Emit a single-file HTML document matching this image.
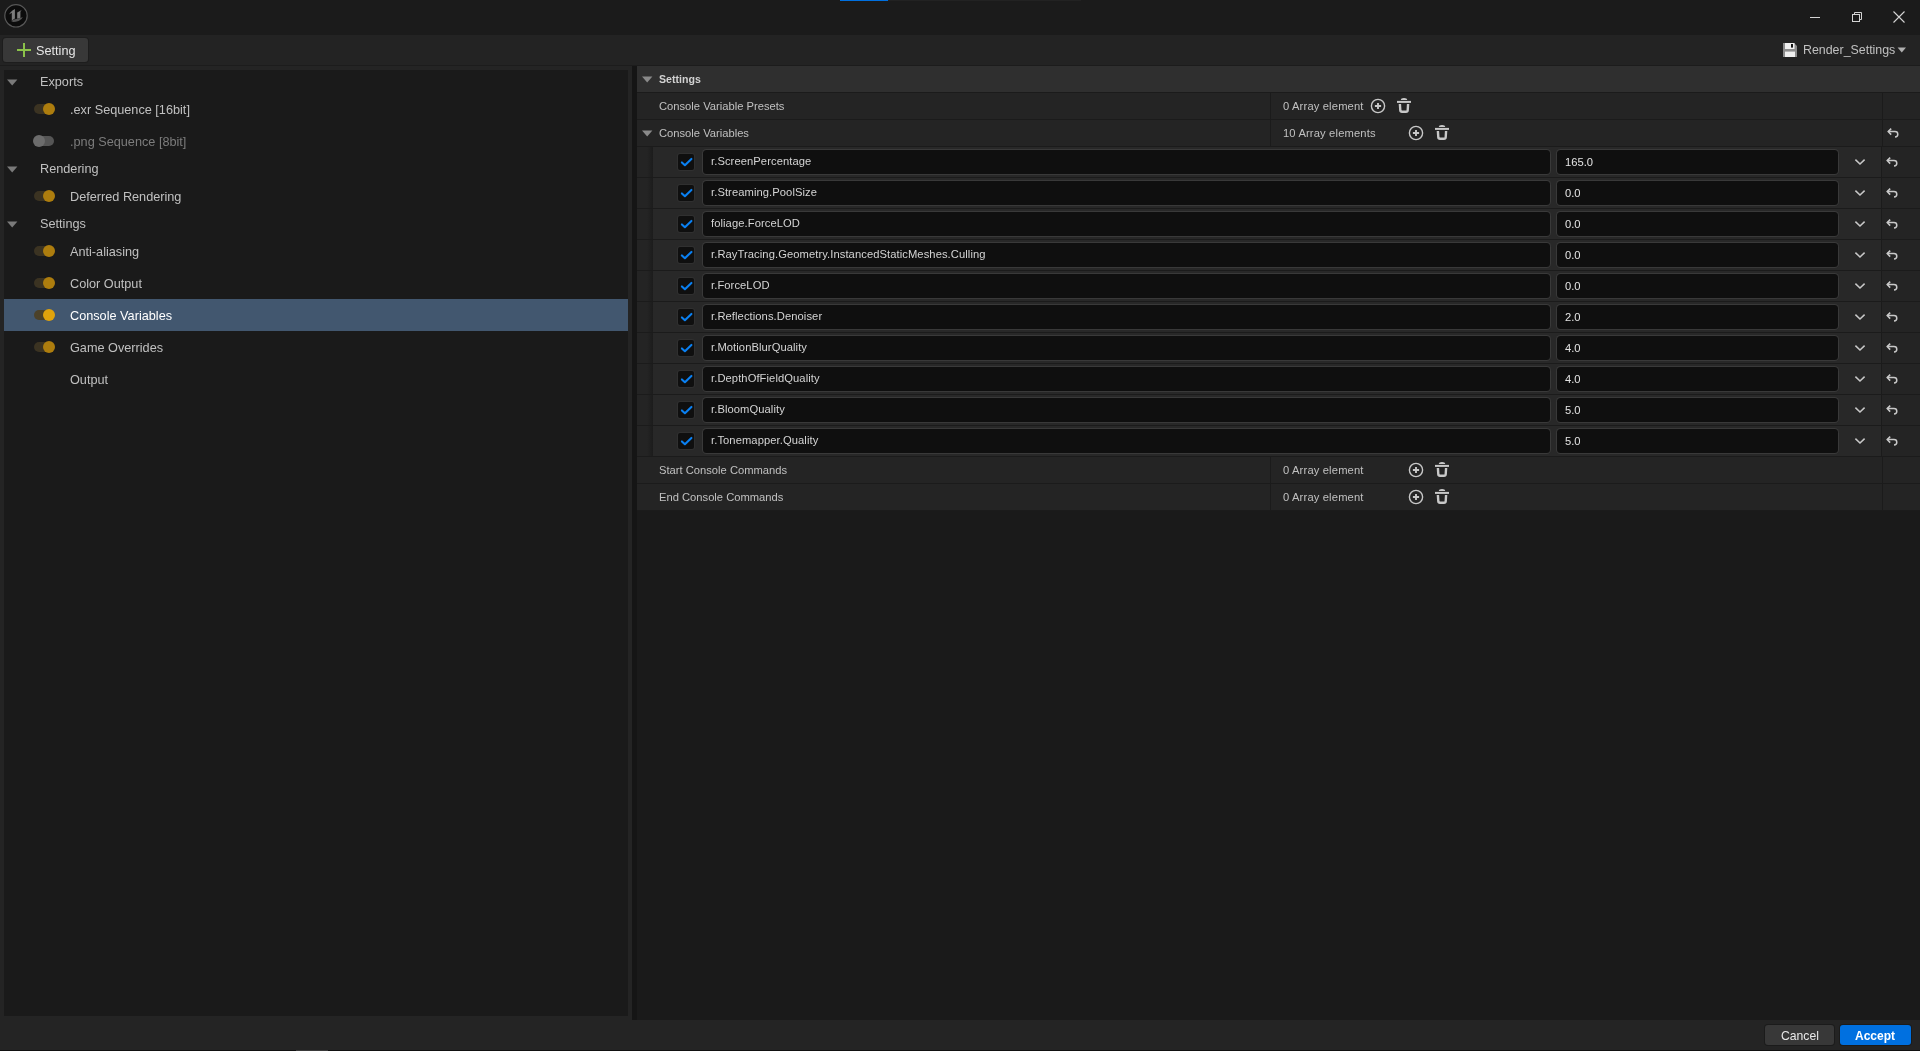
<!DOCTYPE html>
<html><head><meta charset="utf-8"><title>Render Settings</title>
<style>
html,body{margin:0;padding:0;width:1920px;height:1051px;overflow:hidden;background:#1b1b1b;}
body{position:relative;font-family:"Liberation Sans", sans-serif;}
div,svg{position:absolute;box-sizing:border-box;}
.t{white-space:nowrap;line-height:1;will-change:transform;}
</style></head><body>
<div style="left:0px;top:0px;width:1920px;height:35px;background:#1b1b1b;"></div>
<div style="left:840px;top:0px;width:48px;height:1px;background:#0070e0;"></div>
<div style="left:888px;top:0px;width:193px;height:1px;background:#222222;"></div>
<svg style="left:0px;top:0px" width="32" height="32" viewBox="0 0 32 32"><circle cx="16" cy="15.8" r="11.2" fill="#0c0c0c" stroke="#585858" stroke-width="1.2"/><path d="M9.2 14.6 Q10.2 11.6 14.9 9.1 L14.9 18.6 L11.8 20.6 L11.8 12.8 Q10.6 13.3 9.2 14.6 Z" fill="#7c7c7c"/><path d="M17.2 12.4 L21.7 9.9 L20.4 11.8 L20.4 17.8 L17.2 18.8 Z" fill="#7c7c7c"/><path d="M11.0 20.9 Q14 19.3 17.2 18.8 L20.4 17.8 Q21.8 17.6 22.8 17.0 Q21.9 20.0 18.6 20.9 Q15.4 21.7 13.2 21.9 Z" fill="#555555"/></svg>
<div style="left:1810px;top:17px;width:10px;height:1px;background:#d4d4d4;"></div>
<svg style="left:1850px;top:10px" width="14" height="14" viewBox="0 0 14 14"><rect x="2.5" y="4.5" width="7" height="7" fill="none" stroke="#d4d4d4" stroke-width="1"/><path d="M4.5 4.5 V2.5 H11.5 V9.5 H9.5" fill="none" stroke="#d4d4d4" stroke-width="1"/></svg>
<svg style="left:1891px;top:10px" width="16" height="16" viewBox="0 0 16 16"><path d="M2.5 1.5 L13.5 12.5 M13.5 1.5 L2.5 12.5" stroke="#d4d4d4" stroke-width="1.1"/></svg>
<div style="left:0px;top:35px;width:1920px;height:30px;background:#232323;"></div>
<div style="left:0px;top:65px;width:1920px;height:1px;background:#1c1c1c;"></div>
<div style="left:3px;top:38px;width:85px;height:24px;background:#383838;border-radius:3px;box-shadow:0 0 0 1px #1d1d1d;"></div>
<div style="left:17px;top:49px;width:14px;height:2.4px;background:#8bc24a;"></div>
<div style="left:22.8px;top:43px;width:2.4px;height:14px;background:#8bc24a;"></div>
<div class="t" style="left:35.7px;top:44.55px;font-size:12.7px;color:#e6e6e6;font-weight:400;">Setting</div>
<svg style="left:1782px;top:42px" width="16" height="16" viewBox="0 0 16 16"><path d="M1 1 H12 L15 4 V15 H1 Z" fill="#8c8c8c"/><rect x="3" y="1" width="9.5" height="6" fill="#f0f0f0"/><rect x="9" y="2" width="2" height="3.6" fill="#111"/><rect x="3" y="9.6" width="10" height="5.4" fill="#f0f0f0"/></svg>
<div class="t" style="left:1802.7px;top:44.10px;font-size:12.4px;color:#c0c0c0;font-weight:400;">Render_Settings</div>
<svg style="left:1897px;top:47px" width="10" height="6" viewBox="0 0 10 6"><path d="M0.6 0.6 H9 L4.8 5.4 Z" fill="#b0b0b0"/></svg>
<div style="left:0px;top:66px;width:632px;height:950px;background:#242424;"></div>
<div style="left:4px;top:70px;width:624px;height:946px;background:#1a1a1a;"></div>
<svg style="left:6.7px;top:78.8px" width="11" height="7" viewBox="0 0 11 7"><path d="M0 0.4 H10.4 L5.2 6.6 Z" fill="#7a7a7a"/></svg>
<div class="t" style="left:40.4px;top:76.05px;font-size:12.7px;color:#c0c0c0;font-weight:400;">Exports</div>
<div style="left:34px;top:104px;width:20px;height:10px;background:#3b3322;border-radius:5px;"></div>
<div style="left:43px;top:102.8px;width:12.4px;height:12.4px;background:#ad7d0e;border-radius:50%;"></div>
<div class="t" style="left:70.3px;top:104.05px;font-size:12.7px;color:#c0c0c0;font-weight:400;">.exr Sequence [16bit]</div>
<div style="left:34px;top:136px;width:20px;height:10px;background:#555555;border-radius:5px;"></div>
<div style="left:32.8px;top:134.8px;width:12.4px;height:12.4px;background:#6c6c6c;border-radius:50%;"></div>
<div class="t" style="left:70.3px;top:136.05px;font-size:12.7px;color:#7c7c7c;font-weight:400;">.png Sequence [8bit]</div>
<svg style="left:6.7px;top:165.8px" width="11" height="7" viewBox="0 0 11 7"><path d="M0 0.4 H10.4 L5.2 6.6 Z" fill="#7a7a7a"/></svg>
<div class="t" style="left:40.4px;top:163.05px;font-size:12.7px;color:#c0c0c0;font-weight:400;">Rendering</div>
<div style="left:34px;top:191px;width:20px;height:10px;background:#3b3322;border-radius:5px;"></div>
<div style="left:43px;top:189.8px;width:12.4px;height:12.4px;background:#ad7d0e;border-radius:50%;"></div>
<div class="t" style="left:70.3px;top:191.05px;font-size:12.7px;color:#c0c0c0;font-weight:400;">Deferred Rendering</div>
<svg style="left:6.7px;top:220.8px" width="11" height="7" viewBox="0 0 11 7"><path d="M0 0.4 H10.4 L5.2 6.6 Z" fill="#7a7a7a"/></svg>
<div class="t" style="left:40.4px;top:218.05px;font-size:12.7px;color:#c0c0c0;font-weight:400;">Settings</div>
<div style="left:34px;top:246px;width:20px;height:10px;background:#3b3322;border-radius:5px;"></div>
<div style="left:43px;top:244.8px;width:12.4px;height:12.4px;background:#ad7d0e;border-radius:50%;"></div>
<div class="t" style="left:70.3px;top:246.05px;font-size:12.7px;color:#c0c0c0;font-weight:400;">Anti-aliasing</div>
<div style="left:34px;top:278px;width:20px;height:10px;background:#3b3322;border-radius:5px;"></div>
<div style="left:43px;top:276.8px;width:12.4px;height:12.4px;background:#ad7d0e;border-radius:50%;"></div>
<div class="t" style="left:70.3px;top:278.05px;font-size:12.7px;color:#c0c0c0;font-weight:400;">Color Output</div>
<div style="left:4px;top:299px;width:624px;height:32px;background:#42576f;"></div>
<div style="left:34px;top:310px;width:20px;height:10px;background:#4b4129;border-radius:5px;"></div>
<div style="left:43px;top:308.8px;width:12.4px;height:12.4px;background:#e0a30c;border-radius:50%;"></div>
<div class="t" style="left:70.3px;top:310.05px;font-size:12.7px;color:#ffffff;font-weight:400;">Console Variables</div>
<div style="left:34px;top:342px;width:20px;height:10px;background:#3b3322;border-radius:5px;"></div>
<div style="left:43px;top:340.8px;width:12.4px;height:12.4px;background:#ad7d0e;border-radius:50%;"></div>
<div class="t" style="left:70.3px;top:342.05px;font-size:12.7px;color:#c0c0c0;font-weight:400;">Game Overrides</div>
<div class="t" style="left:70.3px;top:374.05px;font-size:12.7px;color:#c0c0c0;font-weight:400;">Output</div>
<div style="left:632px;top:66px;width:5px;height:954px;background:#151515;"></div>
<div style="left:637px;top:66px;width:1283px;height:954px;background:#1a1a1a;"></div>
<div style="left:637px;top:66px;width:1283px;height:26px;background:#2f2f2f;"></div>
<div style="left:637px;top:92px;width:1283px;height:1px;background:#1b1b1b;"></div>
<svg style="left:641.8px;top:75.8px" width="11" height="7" viewBox="0 0 11 7"><path d="M0 0.4 H10.4 L5.2 6.6 Z" fill="#8a8a8a"/></svg>
<div class="t" style="left:659.2px;top:74.03px;font-size:10.6px;color:#d2d2d2;font-weight:700;">Settings</div>
<div style="left:637px;top:93px;width:1283px;height:26px;background:#242424;"></div>
<div style="left:637px;top:119px;width:1283px;height:1px;background:#1b1b1b;"></div>
<div style="left:1270px;top:93px;width:1px;height:26px;background:#1b1b1b;"></div>
<div style="left:1882px;top:93px;width:1px;height:26px;background:#1b1b1b;"></div>
<div class="t" style="left:659.3px;top:100.52px;font-size:11.2px;color:#c0c0c0;font-weight:400;">Console Variable Presets</div>
<div class="t" style="left:1283.2px;top:100.52px;font-size:11.2px;color:#c0c0c0;font-weight:400;letter-spacing:0.15px;">0 Array element</div>
<svg style="left:1370px;top:97.9px" width="16" height="16" viewBox="0 0 16 16"><circle cx="8" cy="8" r="6.6" fill="none" stroke="#c8c8c8" stroke-width="1.4"/><path d="M4.9 8 H11.1 M8 4.9 V11.1" stroke="#c8c8c8" stroke-width="1.9"/></svg>
<svg style="left:1397px;top:97px" width="15" height="17" viewBox="0 0 15 17"><path d="M3.8 2.9 Q3.8 0.9 7 0.9 Q10.2 0.9 10.2 2.9 Z" fill="#c8c8c8"/><rect x="0" y="3.9" width="14" height="2" fill="#c8c8c8"/><path d="M2.9 7 L3.3 13.2 Q3.4 14.8 5 14.8 H9 Q10.6 14.8 10.7 13.2 L11.1 7" fill="none" stroke="#c8c8c8" stroke-width="2.4"/></svg>
<div style="left:637px;top:120px;width:1283px;height:26px;background:#242424;"></div>
<div style="left:637px;top:146px;width:1283px;height:1px;background:#1b1b1b;"></div>
<div style="left:1270px;top:120px;width:1px;height:26px;background:#1b1b1b;"></div>
<div style="left:1882px;top:120px;width:1px;height:26px;background:#1b1b1b;"></div>
<svg style="left:641.8px;top:130px" width="11" height="7" viewBox="0 0 11 7"><path d="M0 0.4 H10.4 L5.2 6.6 Z" fill="#8a8a8a"/></svg>
<div class="t" style="left:659.3px;top:127.52px;font-size:11.2px;color:#c0c0c0;font-weight:400;">Console Variables</div>
<div class="t" style="left:1283.2px;top:127.52px;font-size:11.2px;color:#c0c0c0;font-weight:400;letter-spacing:0.15px;">10 Array elements</div>
<svg style="left:1408px;top:124.9px" width="16" height="16" viewBox="0 0 16 16"><circle cx="8" cy="8" r="6.6" fill="none" stroke="#c8c8c8" stroke-width="1.4"/><path d="M4.9 8 H11.1 M8 4.9 V11.1" stroke="#c8c8c8" stroke-width="1.9"/></svg>
<svg style="left:1435px;top:124px" width="15" height="17" viewBox="0 0 15 17"><path d="M3.8 2.9 Q3.8 0.9 7 0.9 Q10.2 0.9 10.2 2.9 Z" fill="#c8c8c8"/><rect x="0" y="3.9" width="14" height="2" fill="#c8c8c8"/><path d="M2.9 7 L3.3 13.2 Q3.4 14.8 5 14.8 H9 Q10.6 14.8 10.7 13.2 L11.1 7" fill="none" stroke="#c8c8c8" stroke-width="2.4"/></svg>
<svg style="left:1887px;top:128px" width="14" height="12" viewBox="0 0 14 12"><path d="M1.2 3.6 H8 Q10.8 3.6 10.8 6.3 Q10.8 9 8 9" fill="none" stroke="#c8c8c8" stroke-width="1.5"/><path d="M4.2 0.6 L1.2 3.6 L4.2 6.6" fill="none" stroke="#c8c8c8" stroke-width="1.5"/></svg>
<div style="left:637px;top:147px;width:16px;height:30px;background:#242424;"></div>
<div style="left:647px;top:147px;width:6px;height:30px;background:linear-gradient(90deg,#242424,#1c1c1c);"></div>
<div style="left:653px;top:147px;width:1228px;height:30px;background:#282828;"></div>
<div style="left:1881px;top:147px;width:1px;height:30px;background:#1b1b1b;"></div>
<div style="left:1882px;top:147px;width:38px;height:30px;background:#242424;"></div>
<div style="left:637px;top:177px;width:1283px;height:1px;background:#1b1b1b;"></div>
<div style="left:678px;top:154px;width:16px;height:16px;background:#0f0f0f;border-radius:2px;box-shadow:0 0 0 1px #303030;"></div>
<svg style="left:677px;top:153px" width="18" height="18" viewBox="0 0 18 18"><path d="M4.9 9.4 L7.9 12.2 L14.4 5.9" fill="none" stroke="#0a80f2" stroke-width="2.1" stroke-linecap="round" stroke-linejoin="round"/></svg>
<div style="left:703px;top:150px;width:847px;height:24px;background:#0f0f0f;border-radius:3.5px;box-shadow:0 0 0 1px #393939;"></div>
<div class="t" style="left:711px;top:156.02px;font-size:11.2px;color:#d4d4d4;font-weight:400;letter-spacing:0.08px;">r.ScreenPercentage</div>
<div style="left:1557px;top:150px;width:281px;height:24px;background:#0f0f0f;border-radius:3.5px;box-shadow:0 0 0 1px #393939;"></div>
<div class="t" style="left:1565.2px;top:156.52px;font-size:11.2px;color:#e4e4e4;font-weight:400;">165.0</div>
<svg style="left:1854px;top:158px" width="12" height="8" viewBox="0 0 12 8"><path d="M1.4 1.6 L6 6 L10.6 1.6" fill="none" stroke="#c8c8c8" stroke-width="1.5"/></svg>
<svg style="left:1885.5px;top:156.5px" width="14" height="12" viewBox="0 0 14 12"><path d="M1.2 3.6 H8 Q10.8 3.6 10.8 6.3 Q10.8 9 8 9" fill="none" stroke="#c8c8c8" stroke-width="1.5"/><path d="M4.2 0.6 L1.2 3.6 L4.2 6.6" fill="none" stroke="#c8c8c8" stroke-width="1.5"/></svg>
<div style="left:637px;top:178px;width:16px;height:30px;background:#242424;"></div>
<div style="left:647px;top:178px;width:6px;height:30px;background:linear-gradient(90deg,#242424,#1c1c1c);"></div>
<div style="left:653px;top:178px;width:1228px;height:30px;background:#282828;"></div>
<div style="left:1881px;top:178px;width:1px;height:30px;background:#1b1b1b;"></div>
<div style="left:1882px;top:178px;width:38px;height:30px;background:#242424;"></div>
<div style="left:637px;top:208px;width:1283px;height:1px;background:#1b1b1b;"></div>
<div style="left:678px;top:185px;width:16px;height:16px;background:#0f0f0f;border-radius:2px;box-shadow:0 0 0 1px #303030;"></div>
<svg style="left:677px;top:184px" width="18" height="18" viewBox="0 0 18 18"><path d="M4.9 9.4 L7.9 12.2 L14.4 5.9" fill="none" stroke="#0a80f2" stroke-width="2.1" stroke-linecap="round" stroke-linejoin="round"/></svg>
<div style="left:703px;top:181px;width:847px;height:24px;background:#0f0f0f;border-radius:3.5px;box-shadow:0 0 0 1px #393939;"></div>
<div class="t" style="left:711px;top:187.02px;font-size:11.2px;color:#d4d4d4;font-weight:400;letter-spacing:0.08px;">r.Streaming.PoolSize</div>
<div style="left:1557px;top:181px;width:281px;height:24px;background:#0f0f0f;border-radius:3.5px;box-shadow:0 0 0 1px #393939;"></div>
<div class="t" style="left:1565.2px;top:187.52px;font-size:11.2px;color:#e4e4e4;font-weight:400;">0.0</div>
<svg style="left:1854px;top:189px" width="12" height="8" viewBox="0 0 12 8"><path d="M1.4 1.6 L6 6 L10.6 1.6" fill="none" stroke="#c8c8c8" stroke-width="1.5"/></svg>
<svg style="left:1885.5px;top:187.5px" width="14" height="12" viewBox="0 0 14 12"><path d="M1.2 3.6 H8 Q10.8 3.6 10.8 6.3 Q10.8 9 8 9" fill="none" stroke="#c8c8c8" stroke-width="1.5"/><path d="M4.2 0.6 L1.2 3.6 L4.2 6.6" fill="none" stroke="#c8c8c8" stroke-width="1.5"/></svg>
<div style="left:637px;top:209px;width:16px;height:30px;background:#242424;"></div>
<div style="left:647px;top:209px;width:6px;height:30px;background:linear-gradient(90deg,#242424,#1c1c1c);"></div>
<div style="left:653px;top:209px;width:1228px;height:30px;background:#282828;"></div>
<div style="left:1881px;top:209px;width:1px;height:30px;background:#1b1b1b;"></div>
<div style="left:1882px;top:209px;width:38px;height:30px;background:#242424;"></div>
<div style="left:637px;top:239px;width:1283px;height:1px;background:#1b1b1b;"></div>
<div style="left:678px;top:216px;width:16px;height:16px;background:#0f0f0f;border-radius:2px;box-shadow:0 0 0 1px #303030;"></div>
<svg style="left:677px;top:215px" width="18" height="18" viewBox="0 0 18 18"><path d="M4.9 9.4 L7.9 12.2 L14.4 5.9" fill="none" stroke="#0a80f2" stroke-width="2.1" stroke-linecap="round" stroke-linejoin="round"/></svg>
<div style="left:703px;top:212px;width:847px;height:24px;background:#0f0f0f;border-radius:3.5px;box-shadow:0 0 0 1px #393939;"></div>
<div class="t" style="left:711px;top:218.02px;font-size:11.2px;color:#d4d4d4;font-weight:400;letter-spacing:0.08px;">foliage.ForceLOD</div>
<div style="left:1557px;top:212px;width:281px;height:24px;background:#0f0f0f;border-radius:3.5px;box-shadow:0 0 0 1px #393939;"></div>
<div class="t" style="left:1565.2px;top:218.52px;font-size:11.2px;color:#e4e4e4;font-weight:400;">0.0</div>
<svg style="left:1854px;top:220px" width="12" height="8" viewBox="0 0 12 8"><path d="M1.4 1.6 L6 6 L10.6 1.6" fill="none" stroke="#c8c8c8" stroke-width="1.5"/></svg>
<svg style="left:1885.5px;top:218.5px" width="14" height="12" viewBox="0 0 14 12"><path d="M1.2 3.6 H8 Q10.8 3.6 10.8 6.3 Q10.8 9 8 9" fill="none" stroke="#c8c8c8" stroke-width="1.5"/><path d="M4.2 0.6 L1.2 3.6 L4.2 6.6" fill="none" stroke="#c8c8c8" stroke-width="1.5"/></svg>
<div style="left:637px;top:240px;width:16px;height:30px;background:#242424;"></div>
<div style="left:647px;top:240px;width:6px;height:30px;background:linear-gradient(90deg,#242424,#1c1c1c);"></div>
<div style="left:653px;top:240px;width:1228px;height:30px;background:#282828;"></div>
<div style="left:1881px;top:240px;width:1px;height:30px;background:#1b1b1b;"></div>
<div style="left:1882px;top:240px;width:38px;height:30px;background:#242424;"></div>
<div style="left:637px;top:270px;width:1283px;height:1px;background:#1b1b1b;"></div>
<div style="left:678px;top:247px;width:16px;height:16px;background:#0f0f0f;border-radius:2px;box-shadow:0 0 0 1px #303030;"></div>
<svg style="left:677px;top:246px" width="18" height="18" viewBox="0 0 18 18"><path d="M4.9 9.4 L7.9 12.2 L14.4 5.9" fill="none" stroke="#0a80f2" stroke-width="2.1" stroke-linecap="round" stroke-linejoin="round"/></svg>
<div style="left:703px;top:243px;width:847px;height:24px;background:#0f0f0f;border-radius:3.5px;box-shadow:0 0 0 1px #393939;"></div>
<div class="t" style="left:711px;top:249.02px;font-size:11.2px;color:#d4d4d4;font-weight:400;letter-spacing:0.08px;">r.RayTracing.Geometry.InstancedStaticMeshes.Culling</div>
<div style="left:1557px;top:243px;width:281px;height:24px;background:#0f0f0f;border-radius:3.5px;box-shadow:0 0 0 1px #393939;"></div>
<div class="t" style="left:1565.2px;top:249.52px;font-size:11.2px;color:#e4e4e4;font-weight:400;">0.0</div>
<svg style="left:1854px;top:251px" width="12" height="8" viewBox="0 0 12 8"><path d="M1.4 1.6 L6 6 L10.6 1.6" fill="none" stroke="#c8c8c8" stroke-width="1.5"/></svg>
<svg style="left:1885.5px;top:249.5px" width="14" height="12" viewBox="0 0 14 12"><path d="M1.2 3.6 H8 Q10.8 3.6 10.8 6.3 Q10.8 9 8 9" fill="none" stroke="#c8c8c8" stroke-width="1.5"/><path d="M4.2 0.6 L1.2 3.6 L4.2 6.6" fill="none" stroke="#c8c8c8" stroke-width="1.5"/></svg>
<div style="left:637px;top:271px;width:16px;height:30px;background:#242424;"></div>
<div style="left:647px;top:271px;width:6px;height:30px;background:linear-gradient(90deg,#242424,#1c1c1c);"></div>
<div style="left:653px;top:271px;width:1228px;height:30px;background:#282828;"></div>
<div style="left:1881px;top:271px;width:1px;height:30px;background:#1b1b1b;"></div>
<div style="left:1882px;top:271px;width:38px;height:30px;background:#242424;"></div>
<div style="left:637px;top:301px;width:1283px;height:1px;background:#1b1b1b;"></div>
<div style="left:678px;top:278px;width:16px;height:16px;background:#0f0f0f;border-radius:2px;box-shadow:0 0 0 1px #303030;"></div>
<svg style="left:677px;top:277px" width="18" height="18" viewBox="0 0 18 18"><path d="M4.9 9.4 L7.9 12.2 L14.4 5.9" fill="none" stroke="#0a80f2" stroke-width="2.1" stroke-linecap="round" stroke-linejoin="round"/></svg>
<div style="left:703px;top:274px;width:847px;height:24px;background:#0f0f0f;border-radius:3.5px;box-shadow:0 0 0 1px #393939;"></div>
<div class="t" style="left:711px;top:280.02px;font-size:11.2px;color:#d4d4d4;font-weight:400;letter-spacing:0.08px;">r.ForceLOD</div>
<div style="left:1557px;top:274px;width:281px;height:24px;background:#0f0f0f;border-radius:3.5px;box-shadow:0 0 0 1px #393939;"></div>
<div class="t" style="left:1565.2px;top:280.52px;font-size:11.2px;color:#e4e4e4;font-weight:400;">0.0</div>
<svg style="left:1854px;top:282px" width="12" height="8" viewBox="0 0 12 8"><path d="M1.4 1.6 L6 6 L10.6 1.6" fill="none" stroke="#c8c8c8" stroke-width="1.5"/></svg>
<svg style="left:1885.5px;top:280.5px" width="14" height="12" viewBox="0 0 14 12"><path d="M1.2 3.6 H8 Q10.8 3.6 10.8 6.3 Q10.8 9 8 9" fill="none" stroke="#c8c8c8" stroke-width="1.5"/><path d="M4.2 0.6 L1.2 3.6 L4.2 6.6" fill="none" stroke="#c8c8c8" stroke-width="1.5"/></svg>
<div style="left:637px;top:302px;width:16px;height:30px;background:#242424;"></div>
<div style="left:647px;top:302px;width:6px;height:30px;background:linear-gradient(90deg,#242424,#1c1c1c);"></div>
<div style="left:653px;top:302px;width:1228px;height:30px;background:#282828;"></div>
<div style="left:1881px;top:302px;width:1px;height:30px;background:#1b1b1b;"></div>
<div style="left:1882px;top:302px;width:38px;height:30px;background:#242424;"></div>
<div style="left:637px;top:332px;width:1283px;height:1px;background:#1b1b1b;"></div>
<div style="left:678px;top:309px;width:16px;height:16px;background:#0f0f0f;border-radius:2px;box-shadow:0 0 0 1px #303030;"></div>
<svg style="left:677px;top:308px" width="18" height="18" viewBox="0 0 18 18"><path d="M4.9 9.4 L7.9 12.2 L14.4 5.9" fill="none" stroke="#0a80f2" stroke-width="2.1" stroke-linecap="round" stroke-linejoin="round"/></svg>
<div style="left:703px;top:305px;width:847px;height:24px;background:#0f0f0f;border-radius:3.5px;box-shadow:0 0 0 1px #393939;"></div>
<div class="t" style="left:711px;top:311.02px;font-size:11.2px;color:#d4d4d4;font-weight:400;letter-spacing:0.08px;">r.Reflections.Denoiser</div>
<div style="left:1557px;top:305px;width:281px;height:24px;background:#0f0f0f;border-radius:3.5px;box-shadow:0 0 0 1px #393939;"></div>
<div class="t" style="left:1565.2px;top:311.52px;font-size:11.2px;color:#e4e4e4;font-weight:400;">2.0</div>
<svg style="left:1854px;top:313px" width="12" height="8" viewBox="0 0 12 8"><path d="M1.4 1.6 L6 6 L10.6 1.6" fill="none" stroke="#c8c8c8" stroke-width="1.5"/></svg>
<svg style="left:1885.5px;top:311.5px" width="14" height="12" viewBox="0 0 14 12"><path d="M1.2 3.6 H8 Q10.8 3.6 10.8 6.3 Q10.8 9 8 9" fill="none" stroke="#c8c8c8" stroke-width="1.5"/><path d="M4.2 0.6 L1.2 3.6 L4.2 6.6" fill="none" stroke="#c8c8c8" stroke-width="1.5"/></svg>
<div style="left:637px;top:333px;width:16px;height:30px;background:#242424;"></div>
<div style="left:647px;top:333px;width:6px;height:30px;background:linear-gradient(90deg,#242424,#1c1c1c);"></div>
<div style="left:653px;top:333px;width:1228px;height:30px;background:#282828;"></div>
<div style="left:1881px;top:333px;width:1px;height:30px;background:#1b1b1b;"></div>
<div style="left:1882px;top:333px;width:38px;height:30px;background:#242424;"></div>
<div style="left:637px;top:363px;width:1283px;height:1px;background:#1b1b1b;"></div>
<div style="left:678px;top:340px;width:16px;height:16px;background:#0f0f0f;border-radius:2px;box-shadow:0 0 0 1px #303030;"></div>
<svg style="left:677px;top:339px" width="18" height="18" viewBox="0 0 18 18"><path d="M4.9 9.4 L7.9 12.2 L14.4 5.9" fill="none" stroke="#0a80f2" stroke-width="2.1" stroke-linecap="round" stroke-linejoin="round"/></svg>
<div style="left:703px;top:336px;width:847px;height:24px;background:#0f0f0f;border-radius:3.5px;box-shadow:0 0 0 1px #393939;"></div>
<div class="t" style="left:711px;top:342.02px;font-size:11.2px;color:#d4d4d4;font-weight:400;letter-spacing:0.08px;">r.MotionBlurQuality</div>
<div style="left:1557px;top:336px;width:281px;height:24px;background:#0f0f0f;border-radius:3.5px;box-shadow:0 0 0 1px #393939;"></div>
<div class="t" style="left:1565.2px;top:342.52px;font-size:11.2px;color:#e4e4e4;font-weight:400;">4.0</div>
<svg style="left:1854px;top:344px" width="12" height="8" viewBox="0 0 12 8"><path d="M1.4 1.6 L6 6 L10.6 1.6" fill="none" stroke="#c8c8c8" stroke-width="1.5"/></svg>
<svg style="left:1885.5px;top:342.5px" width="14" height="12" viewBox="0 0 14 12"><path d="M1.2 3.6 H8 Q10.8 3.6 10.8 6.3 Q10.8 9 8 9" fill="none" stroke="#c8c8c8" stroke-width="1.5"/><path d="M4.2 0.6 L1.2 3.6 L4.2 6.6" fill="none" stroke="#c8c8c8" stroke-width="1.5"/></svg>
<div style="left:637px;top:364px;width:16px;height:30px;background:#242424;"></div>
<div style="left:647px;top:364px;width:6px;height:30px;background:linear-gradient(90deg,#242424,#1c1c1c);"></div>
<div style="left:653px;top:364px;width:1228px;height:30px;background:#282828;"></div>
<div style="left:1881px;top:364px;width:1px;height:30px;background:#1b1b1b;"></div>
<div style="left:1882px;top:364px;width:38px;height:30px;background:#242424;"></div>
<div style="left:637px;top:394px;width:1283px;height:1px;background:#1b1b1b;"></div>
<div style="left:678px;top:371px;width:16px;height:16px;background:#0f0f0f;border-radius:2px;box-shadow:0 0 0 1px #303030;"></div>
<svg style="left:677px;top:370px" width="18" height="18" viewBox="0 0 18 18"><path d="M4.9 9.4 L7.9 12.2 L14.4 5.9" fill="none" stroke="#0a80f2" stroke-width="2.1" stroke-linecap="round" stroke-linejoin="round"/></svg>
<div style="left:703px;top:367px;width:847px;height:24px;background:#0f0f0f;border-radius:3.5px;box-shadow:0 0 0 1px #393939;"></div>
<div class="t" style="left:711px;top:373.02px;font-size:11.2px;color:#d4d4d4;font-weight:400;letter-spacing:0.08px;">r.DepthOfFieldQuality</div>
<div style="left:1557px;top:367px;width:281px;height:24px;background:#0f0f0f;border-radius:3.5px;box-shadow:0 0 0 1px #393939;"></div>
<div class="t" style="left:1565.2px;top:373.52px;font-size:11.2px;color:#e4e4e4;font-weight:400;">4.0</div>
<svg style="left:1854px;top:375px" width="12" height="8" viewBox="0 0 12 8"><path d="M1.4 1.6 L6 6 L10.6 1.6" fill="none" stroke="#c8c8c8" stroke-width="1.5"/></svg>
<svg style="left:1885.5px;top:373.5px" width="14" height="12" viewBox="0 0 14 12"><path d="M1.2 3.6 H8 Q10.8 3.6 10.8 6.3 Q10.8 9 8 9" fill="none" stroke="#c8c8c8" stroke-width="1.5"/><path d="M4.2 0.6 L1.2 3.6 L4.2 6.6" fill="none" stroke="#c8c8c8" stroke-width="1.5"/></svg>
<div style="left:637px;top:395px;width:16px;height:30px;background:#242424;"></div>
<div style="left:647px;top:395px;width:6px;height:30px;background:linear-gradient(90deg,#242424,#1c1c1c);"></div>
<div style="left:653px;top:395px;width:1228px;height:30px;background:#282828;"></div>
<div style="left:1881px;top:395px;width:1px;height:30px;background:#1b1b1b;"></div>
<div style="left:1882px;top:395px;width:38px;height:30px;background:#242424;"></div>
<div style="left:637px;top:425px;width:1283px;height:1px;background:#1b1b1b;"></div>
<div style="left:678px;top:402px;width:16px;height:16px;background:#0f0f0f;border-radius:2px;box-shadow:0 0 0 1px #303030;"></div>
<svg style="left:677px;top:401px" width="18" height="18" viewBox="0 0 18 18"><path d="M4.9 9.4 L7.9 12.2 L14.4 5.9" fill="none" stroke="#0a80f2" stroke-width="2.1" stroke-linecap="round" stroke-linejoin="round"/></svg>
<div style="left:703px;top:398px;width:847px;height:24px;background:#0f0f0f;border-radius:3.5px;box-shadow:0 0 0 1px #393939;"></div>
<div class="t" style="left:711px;top:404.02px;font-size:11.2px;color:#d4d4d4;font-weight:400;letter-spacing:0.08px;">r.BloomQuality</div>
<div style="left:1557px;top:398px;width:281px;height:24px;background:#0f0f0f;border-radius:3.5px;box-shadow:0 0 0 1px #393939;"></div>
<div class="t" style="left:1565.2px;top:404.52px;font-size:11.2px;color:#e4e4e4;font-weight:400;">5.0</div>
<svg style="left:1854px;top:406px" width="12" height="8" viewBox="0 0 12 8"><path d="M1.4 1.6 L6 6 L10.6 1.6" fill="none" stroke="#c8c8c8" stroke-width="1.5"/></svg>
<svg style="left:1885.5px;top:404.5px" width="14" height="12" viewBox="0 0 14 12"><path d="M1.2 3.6 H8 Q10.8 3.6 10.8 6.3 Q10.8 9 8 9" fill="none" stroke="#c8c8c8" stroke-width="1.5"/><path d="M4.2 0.6 L1.2 3.6 L4.2 6.6" fill="none" stroke="#c8c8c8" stroke-width="1.5"/></svg>
<div style="left:637px;top:426px;width:16px;height:30px;background:#242424;"></div>
<div style="left:647px;top:426px;width:6px;height:30px;background:linear-gradient(90deg,#242424,#1c1c1c);"></div>
<div style="left:653px;top:426px;width:1228px;height:30px;background:#282828;"></div>
<div style="left:1881px;top:426px;width:1px;height:30px;background:#1b1b1b;"></div>
<div style="left:1882px;top:426px;width:38px;height:30px;background:#242424;"></div>
<div style="left:637px;top:456px;width:1283px;height:1px;background:#1b1b1b;"></div>
<div style="left:678px;top:433px;width:16px;height:16px;background:#0f0f0f;border-radius:2px;box-shadow:0 0 0 1px #303030;"></div>
<svg style="left:677px;top:432px" width="18" height="18" viewBox="0 0 18 18"><path d="M4.9 9.4 L7.9 12.2 L14.4 5.9" fill="none" stroke="#0a80f2" stroke-width="2.1" stroke-linecap="round" stroke-linejoin="round"/></svg>
<div style="left:703px;top:429px;width:847px;height:24px;background:#0f0f0f;border-radius:3.5px;box-shadow:0 0 0 1px #393939;"></div>
<div class="t" style="left:711px;top:435.02px;font-size:11.2px;color:#d4d4d4;font-weight:400;letter-spacing:0.08px;">r.Tonemapper.Quality</div>
<div style="left:1557px;top:429px;width:281px;height:24px;background:#0f0f0f;border-radius:3.5px;box-shadow:0 0 0 1px #393939;"></div>
<div class="t" style="left:1565.2px;top:435.52px;font-size:11.2px;color:#e4e4e4;font-weight:400;">5.0</div>
<svg style="left:1854px;top:437px" width="12" height="8" viewBox="0 0 12 8"><path d="M1.4 1.6 L6 6 L10.6 1.6" fill="none" stroke="#c8c8c8" stroke-width="1.5"/></svg>
<svg style="left:1885.5px;top:435.5px" width="14" height="12" viewBox="0 0 14 12"><path d="M1.2 3.6 H8 Q10.8 3.6 10.8 6.3 Q10.8 9 8 9" fill="none" stroke="#c8c8c8" stroke-width="1.5"/><path d="M4.2 0.6 L1.2 3.6 L4.2 6.6" fill="none" stroke="#c8c8c8" stroke-width="1.5"/></svg>
<div style="left:637px;top:457px;width:1283px;height:26px;background:#242424;"></div>
<div style="left:637px;top:483px;width:1283px;height:1px;background:#1b1b1b;"></div>
<div style="left:1270px;top:457px;width:1px;height:26px;background:#1b1b1b;"></div>
<div style="left:1882px;top:457px;width:1px;height:26px;background:#1b1b1b;"></div>
<div class="t" style="left:659.3px;top:464.52px;font-size:11.2px;color:#c0c0c0;font-weight:400;">Start Console Commands</div>
<div class="t" style="left:1283.2px;top:464.52px;font-size:11.2px;color:#c0c0c0;font-weight:400;letter-spacing:0.15px;">0 Array element</div>
<svg style="left:1408px;top:461.9px" width="16" height="16" viewBox="0 0 16 16"><circle cx="8" cy="8" r="6.6" fill="none" stroke="#c8c8c8" stroke-width="1.4"/><path d="M4.9 8 H11.1 M8 4.9 V11.1" stroke="#c8c8c8" stroke-width="1.9"/></svg>
<svg style="left:1435px;top:461px" width="15" height="17" viewBox="0 0 15 17"><path d="M3.8 2.9 Q3.8 0.9 7 0.9 Q10.2 0.9 10.2 2.9 Z" fill="#c8c8c8"/><rect x="0" y="3.9" width="14" height="2" fill="#c8c8c8"/><path d="M2.9 7 L3.3 13.2 Q3.4 14.8 5 14.8 H9 Q10.6 14.8 10.7 13.2 L11.1 7" fill="none" stroke="#c8c8c8" stroke-width="2.4"/></svg>
<div style="left:637px;top:484px;width:1283px;height:26px;background:#242424;"></div>
<div style="left:637px;top:510px;width:1283px;height:1px;background:#1b1b1b;"></div>
<div style="left:1270px;top:484px;width:1px;height:26px;background:#1b1b1b;"></div>
<div style="left:1882px;top:484px;width:1px;height:26px;background:#1b1b1b;"></div>
<div class="t" style="left:659.3px;top:491.52px;font-size:11.2px;color:#c0c0c0;font-weight:400;">End Console Commands</div>
<div class="t" style="left:1283.2px;top:491.52px;font-size:11.2px;color:#c0c0c0;font-weight:400;letter-spacing:0.15px;">0 Array element</div>
<svg style="left:1408px;top:488.9px" width="16" height="16" viewBox="0 0 16 16"><circle cx="8" cy="8" r="6.6" fill="none" stroke="#c8c8c8" stroke-width="1.4"/><path d="M4.9 8 H11.1 M8 4.9 V11.1" stroke="#c8c8c8" stroke-width="1.9"/></svg>
<svg style="left:1435px;top:488px" width="15" height="17" viewBox="0 0 15 17"><path d="M3.8 2.9 Q3.8 0.9 7 0.9 Q10.2 0.9 10.2 2.9 Z" fill="#c8c8c8"/><rect x="0" y="3.9" width="14" height="2" fill="#c8c8c8"/><path d="M2.9 7 L3.3 13.2 Q3.4 14.8 5 14.8 H9 Q10.6 14.8 10.7 13.2 L11.1 7" fill="none" stroke="#c8c8c8" stroke-width="2.4"/></svg>
<div style="left:0px;top:1016px;width:632px;height:34px;background:#242424;"></div>
<div style="left:632px;top:1020px;width:1288px;height:30px;background:#242424;"></div>
<div style="left:0px;top:1050px;width:1920px;height:1px;background:#111111;"></div>
<div style="left:296px;top:1050px;width:32px;height:1px;background:#3a3a3a;"></div>
<div style="left:1765px;top:1025px;width:69px;height:20px;background:#383838;border-radius:3px;box-shadow:0 0 0 1px #1b1b1b;"></div>
<div class="t" style="left:1780.6px;top:1029.87px;font-size:12.2px;color:#e8e8e8;font-weight:400;">Cancel</div>
<div style="left:1840px;top:1025px;width:71px;height:20px;background:#0070e0;border-radius:3px;box-shadow:0 0 0 1px #1b1b1b;"></div>
<div class="t" style="left:1855.4px;top:1030.04px;font-size:12.0px;color:#ffffff;font-weight:700;">Accept</div>
</body></html>
